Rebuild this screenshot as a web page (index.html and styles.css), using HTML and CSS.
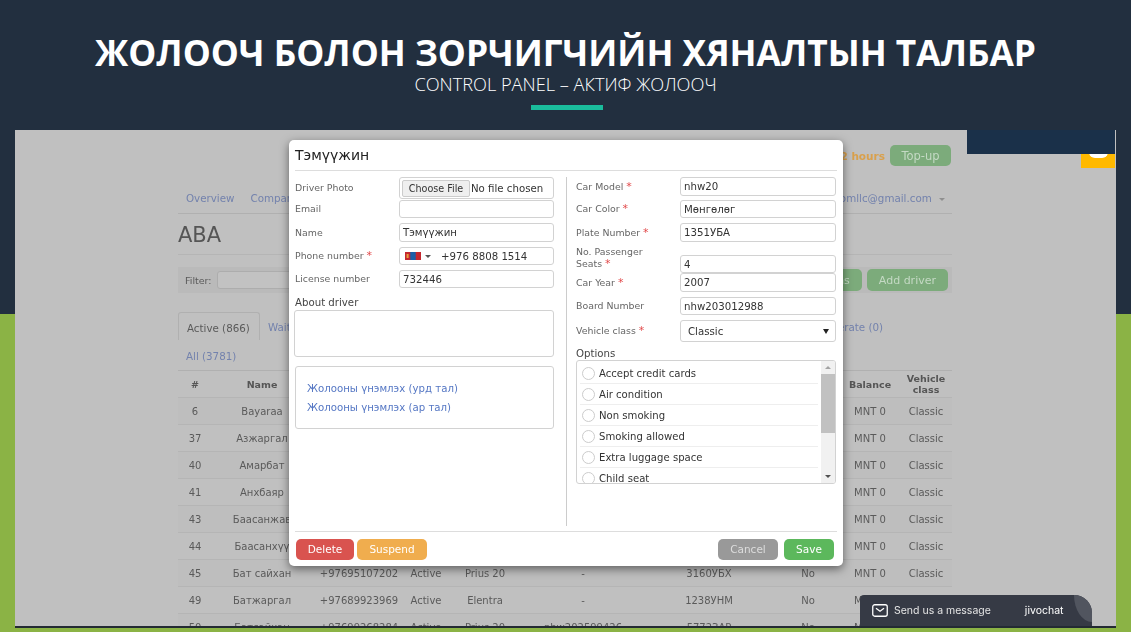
FILE: index.html
```html
<!DOCTYPE html>
<html lang="en">
<head>
  <meta charset="UTF-8" />
  <title>Control panel</title>
  <link rel="stylesheet" href="styles.css">
</head>
<body>

  <header class="hero">
    <h1>ЖОЛООЧ БОЛОН ЗОРЧИГЧИЙН ХЯНАЛТЫН ТАЛБАР</h1>
    <p>CONTROL PANEL – АКТИФ ЖОЛООЧ</p>
    <div class="hero-bar"></div>
  </header>

  <section class="shot">
    <div class="panel">
      <div class="topline">
        <span class="hours">2 hours</span>
        <a class="btn btn-green topup">Top-up</a>
      </div>

      <nav class="mainnav">
        <a>Overview</a>
        <a>Company</a>
        <a class="account">randomllc@gmail.com <i class="caret"></i></a>
      </nav>

      <h2 class="title">ABA</h2>

      <div class="filter">
        <label>Filter:</label>
        <input class="filter-input" type="text" />
        <a class="btn btn-green filter-btn">Notifications</a>
        <a class="btn btn-green filter-btn">Add driver</a>
      </div>

      <div class="tabs">
        <a class="tab active">Active (866)</a>
        <a class="tab">Waiting</a>
        <a class="tab tab-end">Moderate (0)</a>
        <a class="tab tab-all">All (3781)</a>
      </div>

      <table class="drivers">
        <colgroup>
          <col class="c-id"><col class="c-name"><col class="c-phone"><col class="c-status"><col class="c-car">
          <col class="c-board"><col class="c-plate"><col class="c-no"><col class="c-bal"><col class="c-class">
        </colgroup>
        <thead>
          <tr><th>#</th><th>Name</th><th></th><th></th><th></th><th></th><th></th><th></th><th>Balance</th><th>Vehicle class</th></tr>
        </thead>
        <tbody>
          <tr><td>6</td><td>Bayaraa</td><td></td><td></td><td></td><td></td><td></td><td></td><td>MNT 0</td><td>Classic</td></tr>
          <tr><td>37</td><td>Азжаргал</td><td></td><td></td><td></td><td></td><td></td><td></td><td>MNT 0</td><td>Classic</td></tr>
          <tr><td>40</td><td>Амарбат</td><td></td><td></td><td></td><td></td><td></td><td></td><td>MNT 0</td><td>Classic</td></tr>
          <tr><td>41</td><td>Анхбаяр</td><td></td><td></td><td></td><td></td><td></td><td></td><td>MNT 0</td><td>Classic</td></tr>
          <tr><td>43</td><td>Баасанжав</td><td></td><td></td><td></td><td></td><td></td><td></td><td>MNT 0</td><td>Classic</td></tr>
          <tr><td>44</td><td>Баасанхүү</td><td></td><td></td><td></td><td></td><td></td><td></td><td>MNT 0</td><td>Classic</td></tr>
          <tr><td>45</td><td>Бат сайхан</td><td>+97695107202</td><td>Active</td><td>Prius 20</td><td>-</td><td>3160УБХ</td><td>No</td><td>MNT 0</td><td>Classic</td></tr>
          <tr><td>49</td><td>Батжаргал</td><td>+97689923969</td><td>Active</td><td>Elentra</td><td>-</td><td>1238УНМ</td><td>No</td><td>MNT 0</td><td>Classic</td></tr>
          <tr><td>50</td><td>Батсайхан</td><td>+97699268284</td><td>Active</td><td>Prius 20</td><td>nhw202599426</td><td>5772ЗАР</td><td>No</td><td>MNT 0</td><td>Classic</td></tr>
        </tbody>
      </table>
    </div>

    <div class="corner-dark"></div>
    <div class="corner-chip"><span class="chip-bubble"></span></div>

    <!-- driver dialog -->
    <div class="modal">
      <h3 class="modal-title">Тэмүүжин</h3>

      <div class="modal-body">
        <div class="col col-left">
          <div class="row row-file">
            <label>Driver Photo</label>
            <div class="field file"><span class="file-btn">Choose File</span><span>No file chosen</span></div>
          </div>
          <div class="row row-email">
            <label>Email</label>
            <div class="field"></div>
          </div>
          <div class="row row-name">
            <label>Name</label>
            <div class="field">Тэмүүжин</div>
          </div>
          <div class="row">
            <label>Phone number <b>*</b></label>
            <div class="field phone">
              <svg class="flag" width="16" height="8" viewBox="0 0 16 8"><rect width="16" height="8" fill="#c4272f"/><rect x="5.3" width="5.4" height="8" fill="#1a5fa8"/><rect x="1.6" y="2" width="2" height="4" fill="#e9a33c"/></svg>
              <i class="caret caret-dark"></i>
              <span>+976 8808 1514</span>
            </div>
          </div>
          <div class="row">
            <label>License number</label>
            <div class="field">732446</div>
          </div>
          <div class="about-label">About driver</div>
          <div class="about-box"></div>
          <div class="links-box">
            <a>Жолооны үнэмлэх (урд тал)</a>
            <a>Жолооны үнэмлэх (ар тал)</a>
          </div>
        </div>

        <div class="col col-right">
          <div class="row">
            <label>Car Model <b>*</b></label>
            <div class="field">nhw20</div>
          </div>
          <div class="row row-short">
            <label>Car Color <b>*</b></label>
            <div class="field">Мөнгөлөг</div>
          </div>
          <div class="row row-plate">
            <label>Plate Number <b>*</b></label>
            <div class="field">1351УБА</div>
          </div>
          <div class="row row-seats">
            <label>No. Passenger<br>Seats <b>*</b></label>
            <div class="field">4</div>
          </div>
          <div class="row row-year">
            <label>Car Year <b>*</b></label>
            <div class="field">2007</div>
          </div>
          <div class="row row-boardno">
            <label>Board Number</label>
            <div class="field">nhw203012988</div>
          </div>
          <div class="row row-class">
            <label>Vehicle class <b>*</b></label>
            <div class="field select"><span>Classic</span><i class="select-arrow"></i></div>
          </div>
          <div class="options-label">Options</div>
          <div class="options">
            <ul>
              <li><i class="radio"></i>Accept credit cards</li>
              <li><i class="radio"></i>Air condition</li>
              <li><i class="radio"></i>Non smoking</li>
              <li><i class="radio"></i>Smoking allowed</li>
              <li><i class="radio"></i>Extra luggage space</li>
              <li><i class="radio"></i>Child seat</li>
            </ul>
            <div class="scrollbar">
              <i class="sb-up"></i>
              <div class="sb-thumb"></div>
              <i class="sb-down"></i>
            </div>
          </div>
        </div>
      </div>

      <div class="modal-foot">
        <a class="mbtn red">Delete</a>
        <a class="mbtn orange">Suspend</a>
        <a class="mbtn grey push">Cancel</a>
        <a class="mbtn green">Save</a>
      </div>
    </div>

    <div class="chat">
      <svg class="chat-icon" width="16" height="13" viewBox="0 0 16 13"><rect x="0.75" y="0.75" width="14.5" height="11.5" rx="2" fill="none" stroke="#fff" stroke-width="1.3"/><path d="M4 4.2 L8 7.2 L12 4.2" fill="none" stroke="#fff" stroke-width="1.3"/></svg>
      <span class="chat-text">Send us a message</span>
      <span class="chat-brand">jivochat</span>
      <span class="chat-corner"></span>
    </div>
  </section>

</body>
</html>
```

FILE: styles.css
```css
html, body {
  margin: 0;
  padding: 0;
  height: 632px;
  overflow: hidden;
}

body {
  background: linear-gradient(#222f3f 314px, #8bb345 314px);
  font-family: "DejaVu Sans", sans-serif;
}

.hero {
  height: 130px;
  text-align: center;
  color: #fff;
  font-family: "Open Sans", sans-serif;
  overflow: hidden;
}

.hero h1 {
  margin: 30px 0 0;
  font-size: 35.3px;
  line-height: 44px;
  font-weight: 700;
}

.hero p {
  margin: 0;
  font-size: 18.2px;
  line-height: 20px;
  font-weight: 300;
}

.hero-bar {
  width: 72px;
  height: 5px;
  margin: 11px 0 0 531px;
  background: #1abc9c;
}

/* the blurred app picture */
.shot {
  position: relative;
  height: 496px;
  margin: 0 15px;
  background: #c0c0c0;
  border-bottom: 2px solid #232a33;
  overflow: hidden;
  filter: blur(0.35px);
}

.panel {
  width: 774px;
  margin-left: 163px;
  color: #5a5a5a;
  font-size: 10px;
}

.topline {
  display: flex;
  justify-content: flex-end;
  align-items: center;
  gap: 5px;
  height: 21px;
  padding: 15px 1px 0 0;
}

.hours {
  color: #d9a04c;
  font-weight: 700;
  font-size: 10.5px;
}

.btn {
  display: flex;
  align-items: center;
  justify-content: center;
  border-radius: 5px;
  color: #c4d9c4;
}

.btn-green {
  background: #7cab7b;
}

.topup {
  width: 61px;
  height: 21px;
  font-size: 11.5px;
}

.mainnav {
  display: flex;
  gap: 16px;
  height: 31px;
  margin-top: 16px;
  padding: 0 7px 0 8px;
  font-size: 10.3px;
  line-height: 32px;
  color: #7382ad;
  border-bottom: 1px solid #b0b0b0;
}

.account {
  margin-left: auto;
}

.caret {
  display: inline-block;
  width: 0;
  height: 0;
  margin-left: 4px;
  vertical-align: middle;
  border: 3px solid transparent;
  border-top-color: #8f8f8f;
  border-bottom: 0;
}

.title {
  margin: 0;
  height: 40px;
  line-height: 42px;
  font-size: 21px;
  font-weight: 400;
  color: #555;
  border-bottom: 1px solid #b5b5b5;
}

.filter {
  display: flex;
  align-items: center;
  gap: 5px;
  height: 26px;
  margin-top: 12px;
  padding: 0 4px 0 7px;
  background: #bababa;
  font-size: 9.5px;
}

.filter-input {
  box-sizing: border-box;
  width: 150px;
  height: 18px;
  padding: 0;
  border: 1px solid #adadad;
  border-radius: 3px;
  background: #c2c2c2;
}

.filter-btn {
  height: 22px;
  padding: 0 12px;
  font-size: 11px;
}

.filter-btn:nth-of-type(1) {
  margin-left: auto;
}

.tabs {
  display: flex;
  flex-wrap: wrap;
  width: 705px;
  margin-top: 19px;
  font-size: 10.3px;
  color: #7382ad;
}

.tab {
  height: 28px;
  line-height: 30px;
  padding: 0 8px;
  white-space: nowrap;
}

.active {
  box-sizing: border-box;
  width: 82px;
  height: 28px;
  color: #5a5a5a;
  border: 1px solid #b0b0b0;
  border-bottom: 0;
  border-radius: 3px 3px 0 0;
}

.tab-end {
  margin-left: auto;
  padding-right: 0;
}

.tab-all {
  flex-basis: 100%;
  height: 30px;
  line-height: 32px;
}

.drivers {
  width: 774px;
  table-layout: fixed;
  border-collapse: collapse;
  border-top: 1px solid #b0b0b0;
  font-size: 10px;
  text-align: center;
}

.c-id { width: 34px; }
.c-name { width: 100px; }
.c-phone { width: 94px; }
.c-status { width: 40px; }
.c-car { width: 78px; }
.c-board { width: 118px; }
.c-plate { width: 134px; }
.c-no { width: 64px; }
.c-bal { width: 60px; }
.c-class { width: 52px; }

.drivers th {
  height: 26px;
  padding: 0;
  font-size: 9.5px;
  line-height: 11px;
  color: #555;
  border-bottom: 1px solid #b5b5b5;
}

.drivers td {
  height: 26px;
  padding: 0;
  white-space: nowrap;
  border-bottom: 1px solid #b5b5b5;
}

.drivers tbody tr:nth-child(odd) {
  background: #bebebe;
}

.corner-dark {
  position: absolute;
  top: 0;
  left: 952px;
  width: 148px;
  height: 24px;
  background: #1a3049;
}

.corner-chip {
  position: absolute;
  top: 24px;
  left: 1066px;
  width: 34px;
  height: 14px;
  background: #ffb900;
  overflow: hidden;
}

.chip-bubble {
  position: absolute;
  top: -2px;
  left: 8px;
  width: 19px;
  height: 6px;
  background: #fff;
  border-radius: 0 0 8px 8px;
}

.modal {
  position: absolute;
  top: 10px;
  left: 274px;
  box-sizing: border-box;
  width: 554px;
  height: 426px;
  padding: 0 6px;
  display: flex;
  flex-direction: column;
  background: #fff;
  border-radius: 5px;
  box-shadow: 0 3px 10px rgba(0, 0, 0, 0.5);
  color: #333;
  font-size: 10.2px;
}

.modal-title {
  margin: 0;
  height: 30px;
  line-height: 31px;
  font-size: 14px;
  font-weight: 400;
  color: #222;
  border-bottom: 1px solid #ddd;
}

.modal-body {
  display: flex;
  height: 349px;
  margin-top: 6px;
}

.col-left {
  box-sizing: border-box;
  width: 272px;
  padding-right: 12px;
  border-right: 1px solid #ccc;
}

.col-right {
  box-sizing: border-box;
  width: 270px;
  padding: 0 1px 0 9px;
}

.row {
  display: flex;
  align-items: center;
  height: 18px;
}

.row label {
  width: 104px;
  flex: none;
  font-size: 9.4px;
  line-height: 12px;
  color: #666;
}

.row b {
  color: #e2494a;
  font-weight: 400;
  font-size: 11px;
}

.field {
  box-sizing: border-box;
  display: flex;
  align-items: center;
  flex: 1;
  height: 100%;
  padding: 0 3px;
  border: 1px solid #d2d2d2;
  border-radius: 3px;
  color: #333;
  white-space: nowrap;
}

.col-left .row + .row {
  margin-top: 5px;
}

.col-left .row-file + .row-email {
  margin-top: 1px;
}

.col-left .row-name {
  height: 19px;
}

.col-left .row-file {
  height: 22px;
}

.file {
  padding: 0;
  gap: 1px;
}

.file-btn {
  box-sizing: border-box;
  display: flex;
  align-items: center;
  justify-content: center;
  width: 68px;
  height: 17px;
  margin-left: 2px;
  background: #efefef;
  border: 1px solid #ccc;
  border-radius: 2px;
  font-size: 9.6px;
}

.phone {
  padding-left: 5px;
}

.flag {
  flex: none;
}

.caret-dark {
  border-top-color: #555;
  margin: 0 10px 0 4px;
}

.about-label {
  margin-top: 8px;
  line-height: 13px;
  color: #444;
}

.about-box {
  box-sizing: border-box;
  width: 260px;
  height: 47px;
  margin: 1px 0 0 -1px;
  border: 1px solid #d2d2d2;
  border-radius: 3px;
}

.links-box {
  box-sizing: border-box;
  display: flex;
  flex-direction: column;
  gap: 6px;
  width: 259px;
  height: 63px;
  margin-top: 9px;
  padding: 15px 11px;
  border: 1px solid #d2d2d2;
  border-radius: 3px;
  color: #5577c4;
}

.links-box a {
  line-height: 13px;
}

.col-right .row {
  margin-top: 4px;
}

.col-right .row:first-child {
  height: 19px;
  margin-top: 0;
}

.col-right .row-plate {
  height: 19px;
  margin-top: 5px;
}

.col-right .row-seats {
  margin-top: 13px;
}

.row-seats label {
  align-self: flex-end;
  margin-bottom: 3px;
}

.col-right .row-year {
  height: 19px;
  margin-top: 0;
}

.col-right .row-boardno {
  margin-top: 5px;
}

.col-right .row-class {
  height: 22px;
  margin-top: 5px;
}

.select {
  padding-left: 7px;
  justify-content: space-between;
}

.select-arrow {
  width: 0;
  height: 0;
  margin-right: 3px;
  border: 3px solid transparent;
  border-top: 5px solid #222;
  border-bottom: 0;
}

.options-label {
  margin-top: 5px;
  line-height: 13px;
  color: #444;
}

.options {
  box-sizing: border-box;
  display: flex;
  width: 260px;
  height: 124px;
  border: 1px solid #d2d2d2;
  border-radius: 3px;
  overflow: hidden;
}

.options ul {
  flex: 1;
  margin: 0;
  padding: 2px 3px;
  list-style: none;
}

.options li {
  display: flex;
  align-items: center;
  gap: 4px;
  height: 20px;
  border-bottom: 1px solid #eee;
  color: #333;
  padding-left: 2px;
  font-size: 10.1px;
}

.radio {
  box-sizing: border-box;
  width: 13px;
  height: 13px;
  border: 1px solid #ccc;
  border-radius: 50%;
}

.scrollbar {
  display: flex;
  flex-direction: column;
  align-items: center;
  width: 14px;
  background: #f1f1f1;
}

.sb-up, .sb-down {
  width: 0;
  height: 0;
  margin: 5px 0;
  border: 3px solid transparent;
  border-top: 0;
  border-bottom: 3px solid #a3a3a3;
}

.sb-down {
  margin-top: auto;
  border-bottom: 0;
  border-top: 3px solid #505050;
}

.sb-thumb {
  width: 100%;
  height: 59px;
  background: #c1c1c1;
}

.modal-foot {
  display: flex;
  align-items: center;
  gap: 3px;
  height: 34px;
  margin-top: 5px;
  padding: 0 3px 0 1px;
  border-top: 1px solid #ddd;
}

.mbtn {
  display: flex;
  align-items: center;
  justify-content: center;
  box-sizing: border-box;
  height: 21px;
  border-radius: 5px;
  color: #fff;
  font-size: 10.5px;
}

.red { width: 58px; background: #d9534f; }
.orange { width: 70px; background: #f0ad4e; }
.grey { width: 60px; background: #999; color: #ddd; }
.green { width: 50px; margin-left: 3px; background: #5cb85c; }

.push {
  margin-left: auto;
}

.chat {
  position: absolute;
  top: 465px;
  left: 845px;
  display: flex;
  align-items: center;
  width: 232px;
  height: 31px;
  background: #363a45;
  border-radius: 4px 18px 0 0;
  color: #e4e4e4;
  font-family: "Inter", sans-serif;
  overflow: hidden;
}

.chat-icon {
  flex: none;
  margin-left: 12px;
}

.chat-text {
  margin-left: 6px;
  font-size: 10.5px;
}

.chat-brand {
  margin-left: 34px;
  font-size: 10.5px;
  color: #fff;
}

.chat-corner {
  position: absolute;
  top: 0;
  right: 0;
  width: 18px;
  height: 27px;
  border-radius: 0 0 0 100%;
  background: #51555f;
}
```
